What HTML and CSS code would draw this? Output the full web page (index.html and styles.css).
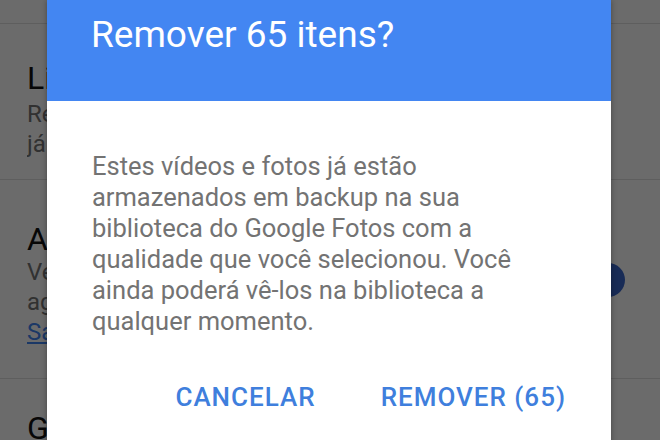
FILE: index.html
```html
<!DOCTYPE html>
<html>
<head>
    <title>Remover itens</title>
    <link rel="stylesheet" href="styles.css">
</head>
<body>
    <div class="settings">
        <div class="setting setting-first">
            <div class="setting-text">
                <div class="setting-title">Liberar espaço do dispositivo</div>
                <div class="setting-desc">Remova os itens do dispositivo que<br>já estão em backup</div>
            </div>
        </div>
        <div class="setting setting-second">
            <div class="setting-text">
                <div class="setting-title">Agrupar rostos semelhantes</div>
                <div class="setting-desc">Veja fotos de pessoas parecidas<br>agrupadas na pesquisa.<br><a class="link" href="#">Saiba mais</a></div>
            </div>
            <div class="switch">
                <div class="switch-track"></div>
                <div class="switch-thumb"></div>
            </div>
        </div>
        <div class="setting setting-third">
            <div class="setting-text">
                <div class="setting-title">Google Lens</div>
            </div>
        </div>
    </div>

    <div class="scrim"></div>

    <div class="dialog">
        <div class="dialog-header">
            <span class="dialog-title">Remover 65 itens?</span>
        </div>
        <div class="dialog-body">
            Estes vídeos e fotos já estão armazenados em backup na sua biblioteca do Google Fotos com a qualidade que você selecionou. Você ainda poderá vê-los na biblioteca a qualquer momento.
        </div>
        <div class="dialog-actions">
            <button class="dialog-button">CANCELAR</button>
            <button class="dialog-button">REMOVER (65)</button>
        </div>
    </div>
</body>
</html>
```

FILE: styles.css
```css
body {
    margin: 0;
    padding: 0;
    width: 660px;
    height: 440px;
    overflow: hidden;
    position: relative;
    background: #ffffff;
    font-family: Roboto, 'Liberation Sans', sans-serif;
}

.settings {
    padding-top: 23px;
}

.setting {
    display: flex;
    align-items: center;
    border-top: 1px solid #e0e0e0;
    padding: 0 35px 0 27px;
}

.setting-first {
    padding-top: 36px;
    padding-bottom: 20px;
}

.setting-first .setting-desc {
    margin-top: 3px;
}

.setting-second {
    padding-top: 41px;
    padding-bottom: 31px;
}

.setting-third {
    padding-top: 31px;
}

.setting-text {
    flex: 1;
    overflow: hidden;
    white-space: nowrap;
}

.setting-title {
    font-size: 32px;
    line-height: 36px;
    color: #111111;
}

.setting-desc {
    font-size: 24px;
    line-height: 30px;
    color: #757575;
}

.link {
    color: #4285f4;
    text-decoration: underline;
}

.switch {
    position: relative;
    width: 58px;
    height: 34px;
    margin-bottom: 8px;
    flex-shrink: 0;
}

.switch-track {
    position: absolute;
    left: 0;
    top: 10px;
    width: 44px;
    height: 14px;
    border-radius: 7px;
    background: #a0c2f9;
}

.switch-thumb {
    position: absolute;
    right: 0;
    top: 0;
    width: 34px;
    height: 34px;
    border-radius: 50%;
    background: #3a68cc;
}

.scrim {
    position: absolute;
    top: 0;
    left: 0;
    right: 0;
    bottom: 0;
    background: rgba(0, 0, 0, 0.58);
}

.dialog {
    position: absolute;
    left: 47px;
    top: 0;
    width: 564px;
    height: 460px;
    background: #ffffff;
    box-shadow: 0 0 6px rgba(0, 0, 0, 0.35);
}

.dialog-header {
    height: 101px;
    box-sizing: border-box;
    padding: 14px 44px 0 44px;
    background: #4386f2;
}

.dialog-title {
    font-size: 37px;
    line-height: 42px;
    color: #ffffff;
}

.dialog-body {
    padding: 50px 40px 0 45px;
    font-size: 25.5px;
    line-height: 31px;
    color: #737373;
}

.dialog-actions {
    display: flex;
    justify-content: flex-end;
    gap: 65px;
    padding: 45px 45px 0 0;
}

.dialog-button {
    padding: 0;
    border: none;
    background: none;
    font-family: Roboto, 'Liberation Sans', sans-serif;
    font-weight: 500;
    font-size: 26px;
    line-height: 30px;
    letter-spacing: 1px;
    color: #3f7fdd;
    cursor: pointer;
}
```
